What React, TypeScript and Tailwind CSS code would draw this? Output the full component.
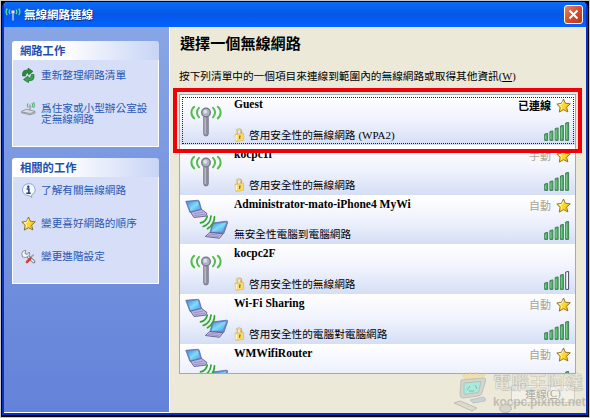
import type { ReactNode } from 'react';

interface Network {
  name: string;
  detail?: string;
  security?: string;
  status?: string;
  secure: boolean;
  adhoc: boolean;
  bars: number;
  selected?: boolean;
}

const networks: Network[] = [
  { name: 'Guest', detail: '啓用安全性的無線網路', security: '(WPA2)', status: '已連線', secure: true, adhoc: false, bars: 5, selected: true },
  { name: 'kocpc1f', detail: '啓用安全性的無線網路', status: '手動', secure: true, adhoc: false, bars: 5 },
  { name: 'Administrator-mato-iPhone4 MyWi', detail: '無安全性電腦到電腦網路', status: '自動', secure: false, adhoc: true, bars: 5 },
  { name: 'kocpc2F', detail: '啓用安全性的無線網路', secure: true, adhoc: false, bars: 4 },
  { name: 'Wi-Fi Sharing', detail: '啓用安全性的電腦對電腦網路', status: '自動', secure: true, adhoc: true, bars: 5 },
  { name: 'WMWifiRouter', status: '自動', secure: false, adhoc: true, bars: 5 },
];

const StarIcon = ({ className }: { className: string }) => (
  <svg className={className} viewBox="0 0 15 15">
    <path d="M7.500 1 9.300 5.200l5 .6-3.700 3.400 1.300 4.700-4.400-2.200-4.200 2.400.8-4.800L.8 6.100l4.700-.8z" fill="#fcd92c" stroke="#86672a" strokeWidth=".9" strokeLinejoin="round" />
    <path d="m7.300 3-1.100 3.100-3 .5 2.400 2.200-.4 2.700" fill="none" stroke="#fff9b8" />
    <path d="m9 10.500 1.600 1.300-.9-3 2.500-2.200" fill="none" stroke="#e5a51c" strokeWidth=".8" />
  </svg>
);

const LockIcon = () => (
  <svg className="h-[14px] w-[11px]" viewBox="0 0 11 14">
    <path d="M2.800 6V3.600C2.800.8 7.200.6 7.300 3.500V5.500" fill="none" stroke="#c9ab50" strokeWidth="1.900" />
    <path d="M2.600 5.500V3.500C2.600 1.200 6.600.9 7 3.200" fill="none" stroke="#faf0b8" strokeWidth=".9" />
    <path d="M1 6.500 9.600 5.300v7L1.800 13.400z" fill="#fbdc66" stroke="#dcb654" strokeWidth=".7" />
    <path d="M2.300 7.300v5" stroke="#fff8cf" strokeWidth="1.400" />
    <path d="M5.200 7.500h1.400v1.400H6.300v2H5.200z" fill="#84681f" />
  </svg>
);

const AntennaIcon = () => (
  <svg className="h-[32px] w-[32px]" viewBox="0 0 32 32">
    <rect x="13.700" y="10" width="4.600" height="21" rx="2.200" fill="#9090a2" stroke="#6e6e80" strokeWidth=".8" />
    <path d="M15.200 12v17" stroke="#c0c0d0" strokeWidth="1.200" />
    <circle cx="16" cy="7.500" r="4.300" fill="#aeb2c2" stroke="#737384" strokeWidth="1.300" />
    <circle cx="15.300" cy="6.700" r="2" fill="#dcdfeb" />
    <g fill="none" strokeLinecap="round" stroke="#55bb4a" strokeWidth="2">
      <path d="M4.200 1.800C.5 4.700.5 10.500 4.200 13.400" />
      <path d="M9 2.900c-2.700 2.600-2.700 6.800 0 9.400" />
      <path d="M27.800 1.800c3.700 2.900 3.700 8.700 0 11.600" />
      <path d="M23 2.900c2.700 2.600 2.700 6.800 0 9.400" />
    </g>
  </svg>
);

const LaptopsIcon = () => (
  <svg className="h-[41px] w-[44px]" viewBox="0 0 44 41">
    <defs>
      <linearGradient id="screen" x1="0" y1="0" x2="1" y2="1">
        <stop offset="0" stopColor="#3f8fe0" />
        <stop offset=".5" stopColor="#7fdcfb" />
        <stop offset="1" stopColor="#4a98e0" />
      </linearGradient>
    </defs>
    <path d="m5 12.500 11-2.500 6 4.500-1.300 2.700-11.700 1.300z" fill="#bdb6e2" stroke="#605d8e" strokeWidth=".9" />
    <path d="M.8 2.300 12.700 1.300q1.300 0 1.600 1.200L16.500 10.500 5 13.500z" fill="#6f86c4" stroke="#596ca8" strokeWidth=".8" />
    <path d="M2.300 3.200 12.800 2.300l2.400 7.500-9.500 2.500z" fill="url(#screen)" />
    <path d="m8.500 14.800 9.500-1.700M9.500 16.600l10.500-1.500" stroke="#8d86c0" strokeWidth=".8" />
    <path d="M27.500 24 41.500 22.200q1.600 0 1 1.700L38.800 34.500 25 34z" fill="#6f86c4" stroke="#596ca8" strokeWidth=".8" />
    <path d="M28.700 25.200 41.300 23.500l-3.800 9.300-11-.1z" fill="url(#screen)" />
    <path d="M24.800 33.500 38 34.800 34.500 39.300 20.300 37.500z" fill="#c4bfe6" stroke="#605d8e" strokeWidth=".9" />
    <path d="m24.500 35.100 11 1.200m-12.500.2 11 1.300" stroke="#8d86c0" strokeWidth=".8" />
    <g fill="none" stroke="#2fa62c" strokeWidth="1.700" strokeLinecap="round">
      <path d="M15.500 23.800q5.500-1 6.700-6.600" />
      <path d="M18.200 27.500q7-2 7.800-10.500" />
      <path d="M22.500 29.800q6.800-4 7-12" />
    </g>
  </svg>
);

const SignalBars = ({ level }: { level: number }) => (
  <svg className="h-[19px] w-[27px]" viewBox="0 0 27 19">
    {[7, 9.500, 12.500, 15, 18].map((h, i) => (
      <g key={i}>
        <path
          d={`M${i * 5.250 + 0.700} ${19 - h}l2.900-.6V18.400h-2.900z`}
          fill={i < level ? '#3fbd55' : '#fafaff'}
          stroke={i < level ? '#4c7862' : '#4c4868'}
          strokeWidth="1"
          strokeLinejoin="round"
        />
        {i < level && <path d={`M${i * 5.250 + 1.500} ${20.500 - h}V17`} stroke="#86dd8c" strokeWidth=".7" />}
      </g>
    ))}
  </svg>
);

const RefreshIcon = () => (
  <svg className="h-[15px] w-[15px]" viewBox="0 0 15 15">
    <path d="M1.500 8V5.500Q1.800 2 5.500 2H7V0l5 3.500L7.500 7V5H6.500Q4.500 5 4.500 8z" fill="#2c8b3b" stroke="#176029" strokeWidth=".6" />
    <path d="M13 6.500v3.300Q12.500 12.700 9 12.700H7.500V14.700L2.500 11.500 7 8v1.800h1.500q1.800 0 1.800-3.300z" fill="#3aa349" stroke="#176029" strokeWidth=".6" />
  </svg>
);

const RouterIcon = () => (
  <svg className="h-[15px] w-[15px]" viewBox="0 0 15 15">
    <path d="M.5 10.300 5.500 8.300l8.500 2v1.900l-4.800 1.600L.6 11.800z" fill="#dcdee4" stroke="#777b86" strokeWidth=".7" />
    <path d="m1 11 8.200 1.500 4.600-1.800" fill="none" stroke="#777b86" strokeWidth=".7" />
    <path d="M9 5V9" stroke="#858995" />
    <path d="M6.800 2.500q-1 2 .2 4m4-4.500q1.300 2.300 0 4.500M9 3.500v2m3.700-4.500q1.500 3.200 0 6" fill="none" stroke="#46a95a" />
  </svg>
);

const InfoIcon = () => (
  <svg className="h-[15px] w-[15px]" viewBox="0 0 15 15">
    <path d="M7.500.7a6.300 6 0 0 1 3 11.400L10.800 14.500 8 12.700A6.300 6 0 1 1 7.500.7z" fill="#f4f8ff" stroke="#8a9dbd" strokeWidth=".9" />
    <circle cx="7.300" cy="3.700" r="1.200" fill="#1e3d84" />
    <path d="M5.600 6h2.300v4M5.300 10.300h4.400" fill="none" stroke="#1e3d84" strokeWidth="1.500" />
  </svg>
);

const WrenchIcon = () => (
  <svg className="h-[15px] w-[15px]" viewBox="0 0 15 15">
    <path d="M12.800 5.500 9 9" stroke="#9c9faa" strokeWidth="1.500" />
    <path d="M6 6.500 12.700 12.700" stroke="#747785" strokeWidth="3.200" strokeLinecap="round" />
    <path d="m6 6.500 6.500 6" stroke="#eef0f5" strokeWidth="1.700" strokeLinecap="round" />
    <path d="M.8 4.500Q1.300 1.300 4.800 1.300L4 4.500l2.200 1L8.300 3q1.200 3-1.300 4.600T1.500 8z" fill="#f6f7fa" stroke="#747785" strokeWidth=".8" />
    <path d="M9.300 9.500 6 13" stroke="#d6402f" strokeWidth="2.600" strokeLinecap="round" />
  </svg>
);

const TitleIcon = () => (
  <svg className="h-[15px] w-[16px]" viewBox="0 0 16 15">
    <path d="M8 5v8.500" stroke="#a3b4dd" strokeWidth="1.800" />
    <circle cx="8" cy="5" r="1.700" fill="#dfe6f6" stroke="#8ea0c6" strokeWidth=".7" />
    <path d="M2.300 1.500q-2.400 3.300 0 6.600M5 2.500q-1.600 2.300 0 4.600m8.700-5.600q2.400 3.300 0 6.600M11 2.500q1.600 2.300 0 4.600" fill="none" stroke="#62dc8a" strokeWidth="1.300" />
  </svg>
);

const PanelTitle = ({ children }: { children: ReactNode }) => (
  <h2 className="flex h-[19px] items-center rounded-t-[3px] bg-linear-to-r from-white from-35% to-[#c8d4f5] pl-[8px] text-[11.300px] font-bold text-[#1f4fae]">
    {children}
  </h2>
);

const Task = ({ icon, children }: { icon: ReactNode; children: ReactNode }) => (
  <div className="flex gap-[5px] pl-[8px]">
    <span className="shrink-0">{icon}</span>
    <span className="whitespace-nowrap pt-[2px] text-[10.650px] leading-[10.500px] text-[#2a57b5]">{children}</span>
  </div>
);

const NetworkRow = ({ network }: { network: Network }) => (
  <li className="relative flex h-[49.800px] shrink-0 bg-linear-to-b from-white via-[#f0f3fd] to-[#d5def5]">
    <div className="w-[54px] shrink-0">
      {network.adhoc ? (
        <div className="pl-[5px] pt-[4px]"><LaptopsIcon /></div>
      ) : (
        <div className="pl-[10px] pt-[10px]"><AntennaIcon /></div>
      )}
    </div>
    <div className="flex min-w-0 flex-1 flex-col justify-between pb-[3px] pt-[3px]">
      <span className="whitespace-nowrap font-['Liberation_Serif',serif] text-[11.500px] font-bold leading-[13px]">
        {network.name}
      </span>
      {network.detail && (
        <div className="flex h-[14px] items-center gap-[4px]">
          {network.secure && <LockIcon />}
          <span className="whitespace-nowrap text-[10.650px] leading-[14px]">
            {network.detail}
            {network.security && <span className="pl-[3px] font-['Liberation_Serif',serif] text-[11px]">{network.security}</span>}
          </span>
        </div>
      )}
    </div>
    <div className="flex w-[64px] shrink-0 flex-col items-end justify-between pb-[4px] pr-[4px] pt-[3px]">
      <div className="flex h-[15px] items-center gap-[5px]">
        {network.status && (
          <>
            <span className={network.selected ? 'text-[11px] font-bold' : 'text-[11px] text-[#aaa294]'}>{network.status}</span>
            <StarIcon className="h-[15px] w-[15px]" />
          </>
        )}
      </div>
      <SignalBars level={network.bars} />
    </div>
    {network.selected && <div className="pointer-events-none absolute bottom-[1px] left-[2px] right-[1px] top-[2px] border border-dotted border-[#222]" />}
  </li>
);

const Watermark = () => (
  <div className="pointer-events-none absolute left-[452px] top-[369px] flex w-[132px] opacity-60">
    <svg className="h-[44px] w-[40px] shrink-0" viewBox="0 0 40 44">
      <path d="m11 8-2-5 5 3 3-4 3 4 4-4 1 4 8-3-4 6z" fill="#f7dc86" stroke="#dfbf62" strokeWidth=".6" />
      <path d="m8 10 23-2q2 0 1.500 3L29 23q-1 3-4 3l-15 2q-3 0-3-4z" fill="#c3c9c6" stroke="#a4a7a2" />
      <path d="m11 13 17-1.500-2.500 11L11 24.500z" fill="#7eebe2" stroke="#8ca9a5" />
      <path d="m14 20 3-4m5-1 2 4m-8 2h5" fill="none" stroke="#528f8e" />
      <path d="m17 30 13-3q4 1 2 4l-12 2z" fill="#afc5dd" stroke="#a7aba9" />
      <path d="m1 33 6-2 17 7-5 3z" fill="#d1d1c9" stroke="#a3a39a" />
    </svg>
    <div className="flex w-[92px] flex-col whitespace-nowrap">
      <span className="font-['Noto_Sans_CJK_TC',sans-serif] text-[18px] font-bold leading-[23px] text-[#efeee6] [-webkit-text-stroke:0.600px_#aaa9a0]">電腦王阿達</span>
      <span className="font-['Liberation_Sans_Narrow','Liberation_Sans',sans-serif] text-[12px] font-bold leading-[19px] tracking-[-0.150px] text-[#a3a299]">kocpc.pixnet.net</span>
    </div>
    <svg className="absolute left-[46px] top-[34px] h-[9px] w-[13px]" viewBox="0 0 13 9">
      <ellipse cx="6.500" cy="4.500" rx="6" ry="4" fill="#c8c8c1" stroke="#999a95" />
    </svg>
  </div>
);

export default function App() {
  return (
    <div className="relative h-[418px] w-[590px] overflow-hidden border border-[#c9c9c9] bg-black p-px font-['Noto_Sans_CJK_TC',sans-serif] text-black">
      <div className="flex h-[413px] w-[586px] flex-col overflow-hidden rounded-t-[5px] border-x-2 border-b-2 border-[#0831c4] bg-[#ece9d8]">
        {/* Title bar */}
        <header className="flex h-[25px] shrink-0 items-center gap-[3px] bg-linear-to-b from-[#0b6cf5] via-[#0557e8] to-[#0263ff] pl-px pr-[3px]">
          <TitleIcon />
          <h1 className="flex-1 text-[11.500px] font-bold text-white [text-shadow:1px_1px_0_#08318b]">無線網路連線</h1>
          <button className="flex h-[19px] w-[19px] items-center justify-center rounded-[3px] border border-white bg-linear-to-br from-[#e58468] via-[#d2502f] to-[#b93614]">
            <svg className="h-[11px] w-[11px]" viewBox="0 0 11 11">
              <path d="m1.500 1.500 8 8m0-8-8 8" stroke="white" strokeWidth="2" />
            </svg>
          </button>
        </header>

        <div className="flex min-h-0 flex-1">
          {/* Task sidebar */}
          <aside className="flex w-[166px] shrink-0 flex-col gap-[11px] border-b border-r border-white bg-linear-to-b from-[#88a5e5] to-[#6382d9] pl-[8px] pt-[14px]">
            <section className="h-[106px] w-[147px]">
              <PanelTitle>網路工作</PanelTitle>
              <div className="flex h-[87px] flex-col gap-[18px] border border-t-0 border-white bg-[#d6dff7] pt-[8px]">
                <Task icon={<RefreshIcon />}>重新整理網路清單</Task>
                <Task icon={<RouterIcon />}>爲住家或小型辦公室設<br />定無線網路</Task>
              </div>
            </section>
            <section className="h-[126px] w-[147px]">
              <PanelTitle>相關的工作</PanelTitle>
              <div className="flex h-[107px] flex-col gap-[18px] border border-t-0 border-white bg-[#d6dff7] pt-[6px]">
                <Task icon={<InfoIcon />}>了解有關無線網路</Task>
                <Task icon={<StarIcon className="h-[15px] w-[15px]" />}>變更喜好網路的順序</Task>
                <Task icon={<WrenchIcon />}>變更進階設定</Task>
              </div>
            </section>
          </aside>

          {/* Network picker */}
          <main className="flex min-w-0 flex-1 flex-col pl-[9px] pt-[6px]">
            <h2 className="h-[20px] pl-px text-[15.100px] font-bold leading-[18px]">選擇一個無線網路</h2>
            <p className="mt-[15px] h-[16px] whitespace-nowrap text-[10.670px] leading-[16px]">
              按下列清單中的一個項目來連線到範圍內的無線網路或取得其他資訊
              <span className="font-['Liberation_Serif',serif] text-[10.500px]">(<u>W</u>)</span>
            </p>
            <ul className="mt-[10px] flex h-[280px] w-[397px] shrink-0 flex-col overflow-hidden border border-[#9badba]">
              {networks.map((network) => (
                <NetworkRow key={network.name} network={network} />
              ))}
            </ul>
            <button className="ml-[332px] mt-[11px] flex h-[18px] w-[64px] items-center justify-center rounded-[2px] border border-[#d0cebf] bg-[#f3f1e7] text-[10.650px] text-[#aaa79a]">
              連線<span className="font-['Liberation_Serif',serif]">(<u>C</u>)</span>
            </button>
          </main>
        </div>
      </div>

      {/* Highlight around the connected network */}
      <div className="pointer-events-none absolute left-[172px] top-[87px] h-[65px] w-[409px] border-4 border-[#f00008]" />
      <Watermark />
    </div>
  );
}
